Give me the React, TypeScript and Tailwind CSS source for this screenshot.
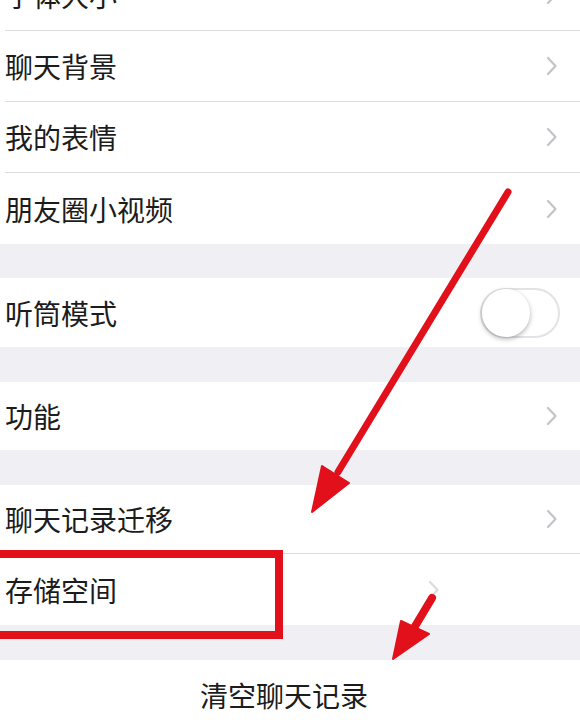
import React from 'react'

const font = { fontFamily: '"Noto Sans CJK SC", "Noto Sans", sans-serif' }

function Chevron({ faint }: { faint?: boolean }) {
  return (
    <svg width="12" height="20" viewBox="0 0 12 20" className="shrink-0">
      <path
        d="M2 2 L9.5 10 L2 18"
        fill="none"
        stroke={faint ? '#dcdce0' : '#c4c4c8'}
        strokeWidth="2.2"
        strokeLinecap="round"
        strokeLinejoin="round"
      />
    </svg>
  )
}

function Row({
  label,
  h,
  last,
  right,
}: {
  label: string
  h: string
  last?: boolean
  right?: React.ReactNode
}) {
  return (
    <div className="bg-white pl-[5px]">
      <div className={`flex items-center justify-between ${h} ${last ? '' : 'border-b border-[#dcdcdf]'}`}>
        <span className="text-[28px] leading-none text-[#1c1c1c]">{label}</span>
        {right ?? (
          <span className="mr-[22px]">
            <Chevron />
          </span>
        )}
      </div>
    </div>
  )
}

function Toggle() {
  return (
    <div className="mr-[20px] flex h-[50px] w-[80px] items-center rounded-full border-2 border-[#e3e3e6] bg-white">
      <div className="h-[48px] w-[48px] rounded-full bg-white shadow-[0_2px_5px_rgba(0,0,0,0.3)]" />
    </div>
  )
}

export default function App() {
  return (
    <div className="relative h-[720px] w-[580px] overflow-hidden bg-[#efeff4]" style={font}>
      <div className="-mt-[40px]">
        <Row label="字体大小" h="h-[71px]" />
        <Row label="聊天背景" h="h-[71px]" />
        <Row label="我的表情" h="h-[71px]" />
        <Row label="朋友圈小视频" h="h-[71px]" last />
        <div className="h-[34px]" />
        <Row label="听筒模式" h="h-[69px]" last right={<Toggle />} />
        <div className="h-[35px]" />
        <Row label="功能" h="h-[68px]" last />
        <div className="h-[35px]" />
        <Row label="聊天记录迁移" h="h-[69px]" />
        <Row
          label="存储空间"
          h="h-[71px]"
          last
          right={
            <span className="mr-[140px]">
              <Chevron faint />
            </span>
          }
        />
        <div className="h-[35px]" />
        <div className="flex h-[70px] items-center justify-center bg-white pr-[12px]">
          <span className="text-[28px] leading-none text-[#1c1c1c]">清空聊天记录</span>
        </div>
      </div>

      {/* red annotations */}
      <div className="absolute left-[-12px] top-[550px] h-[89px] w-[295px] border-[8px] border-[#e1101a]" />
      <svg className="pointer-events-none absolute left-0 top-0" width="580" height="720" viewBox="0 0 580 720">
        <line x1="508" y1="192" x2="338" y2="472" stroke="#e1101a" strokeWidth="7" strokeLinecap="round" />
        <polygon points="312,512 322,466 349,483" fill="#e1101a" stroke="#e1101a" strokeWidth="2" strokeLinejoin="round" />
        <line x1="432" y1="598" x2="414" y2="628" stroke="#e1101a" strokeWidth="8" strokeLinecap="round" />
        <polygon points="393,659 401,621 429,634" fill="#e1101a" stroke="#e1101a" strokeWidth="2" strokeLinejoin="round" />
      </svg>
    </div>
  )
}
